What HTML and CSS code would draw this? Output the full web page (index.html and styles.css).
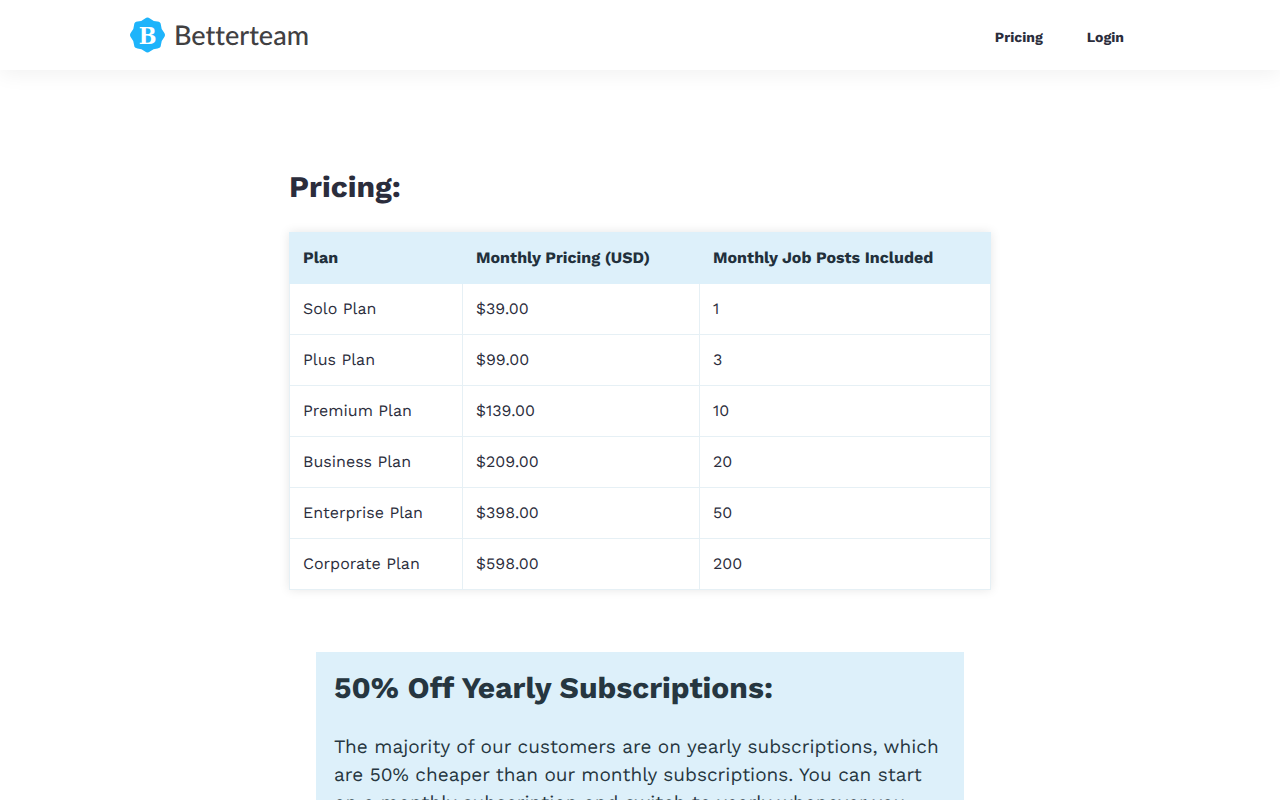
FILE: index.html
```html
<!DOCTYPE html>
<html lang="en">
  <head>
    <meta charset="UTF-8" />
    <meta name="viewport" content="width=device-width, initial-scale=1.0" />
    <title>Pricing | Betterteam</title>
    <link rel="stylesheet" href="styles.css">
  </head>
  <body>
    <header class="site-header">
      <div class="header-inner">
        <a class="logo" href="#">
          <svg class="logo-badge" viewBox="-18 -18 36 36" aria-hidden="true">
            <path fill="#1eb4fb" d="M-2.500 -17Q0 -19 2.500 -17Q6 -13.800 10.300 -13.800Q13.600 -13.600 13.800 -10.300Q13.800 -6 17 -2.500Q19 0 17 2.500Q13.800 6 13.800 10.300Q13.600 13.600 10.300 13.800Q6 13.800 2.500 17Q0 19 -2.500 17Q-6 13.800 -10.300 13.800Q-13.600 13.600 -13.800 10.300Q-13.800 6 -17 2.500Q-19 0 -17 -2.500Q-13.800 -6 -13.800 -10.300Q-13.600 -13.600 -10.300 -13.800Q-6 -13.800 -2.500 -17Z" />
            <text class="logo-letter" x="0" y="9" text-anchor="middle">B</text>
          </svg>
          <span class="logo-name">Betterteam</span>
        </a>
        <nav class="main-nav">
          <a href="#pricing">Pricing</a>
          <a href="#login">Login</a>
        </nav>
      </div>
    </header>

    <main class="content">
      <h2 id="pricing">Pricing:</h2>
      <table class="pricing-table">
        <colgroup>
          <col class="col-plan">
          <col class="col-price">
          <col>
        </colgroup>
        <thead>
          <tr>
            <th scope="col">Plan</th>
            <th scope="col">Monthly Pricing (USD)</th>
            <th scope="col">Monthly Job Posts Included</th>
          </tr>
        </thead>
        <tbody>
          <tr><td>Solo Plan</td><td>$39.00</td><td>1</td></tr>
          <tr><td>Plus Plan</td><td>$99.00</td><td>3</td></tr>
          <tr><td>Premium Plan</td><td>$139.00</td><td>10</td></tr>
          <tr><td>Business Plan</td><td>$209.00</td><td>20</td></tr>
          <tr><td>Enterprise Plan</td><td>$398.00</td><td>50</td></tr>
          <tr><td>Corporate Plan</td><td>$598.00</td><td>200</td></tr>
        </tbody>
      </table>

      <section class="callout">
        <h2>50% Off Yearly Subscriptions:</h2>
        <p>The majority of our customers are on yearly subscriptions, which are 50% cheaper than our monthly subscriptions. You can start on a monthly subscription and switch to yearly whenever you</p>
      </section>
    </main>
  </body>
</html>
```
FILE: styles.css
```css
* {
  box-sizing: border-box;
}

body {
  margin: 0;
  font-family: "Work Sans", Inter, sans-serif;
  font-size: 16px;
  line-height: 20px;
  text-rendering: geometricPrecision;
  color: #2b2d3c;
  background: #fff;
}

a {
  color: inherit;
  text-decoration: none;
}

/* header */
.site-header {
  background: #fff;
  box-shadow: 0 4px 20px rgba(0, 0, 0, 0.06);
}

.header-inner {
  display: flex;
  align-items: center;
  justify-content: space-between;
  max-width: 1020px;
  height: 70px;
  margin: 0 auto;
}

.logo {
  display: flex;
  align-items: center;
  gap: 9px;
}

.logo-badge {
  width: 35px;
  height: 36px;
}

.logo-letter {
  font-family: "DejaVu Serif Condensed", "DejaVu Serif", serif;
  font-size: 24px;
  font-weight: bold;
  fill: #fff;
}

.logo-name {
  font-family: Lato, sans-serif;
  font-size: 27px;
  font-weight: 500;
  font-variant-ligatures: none;
  line-height: 32px;
  color: #414042;
}

.main-nav {
  display: flex;
  gap: 44px;
  padding: 6px 26px 0 0;
  font-size: 14px;
  font-weight: 700;
}

/* pricing */
.content {
  max-width: 702px;
  margin: 0 auto;
  padding-top: 99px;
}

h2 {
  margin: 0;
  font-size: 30px;
  line-height: 38px;
  font-weight: 700;
}

.pricing-table {
  width: 100%;
  margin: 25px 0 62px;
  table-layout: fixed;
  border-collapse: collapse;
  box-shadow: 0 0 10px rgba(0, 0, 0, 0.1);
}

.col-plan {
  width: 173px;
}

.col-price {
  width: 237px;
}

.pricing-table th,
.pricing-table td {
  padding: 15px 13px;
  border: 1px solid #e6f0f5;
  text-align: left;
}

.pricing-table th {
  border-color: #ddf0fa;
  background: #ddf0fa;
  color: #22303c;
  font-weight: 700;
}

.callout {
  margin: 0 27px;
  padding: 18px 18px 20px;
  background: #ddf0fa;
  color: #263640;
}

.callout p {
  margin: 25px 0 0;
  font-size: 19px;
  line-height: 28px;
}
```
